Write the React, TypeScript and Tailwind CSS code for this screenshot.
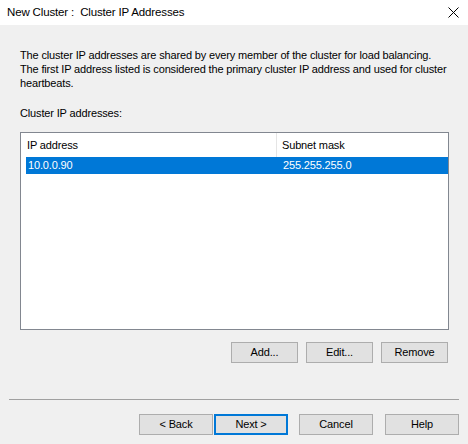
import React from "react";

type Row = { ip: string; mask: string };

const rows: Row[] = [{ ip: "10.0.0.90", mask: "255.255.255.0" }];

function Btn({
  children,
  wide,
  primary,
}: {
  children: React.ReactNode;
  wide?: boolean;
  primary?: boolean;
}) {
  return (
    <button
      className={
        "h-[21px] bg-[#e1e1e1] text-black flex items-center justify-center " +
        (wide ? "w-[74px] " : "w-[67px] ") +
        (primary ? "border-2 border-[#0078d7]" : "border border-[#adadad]")
      }
    >
      {children}
    </button>
  );
}

export default function App() {
  return (
    <div
      className="w-[468px] h-[444px] flex flex-col bg-[#f0f0f0] text-[11px] text-black tracking-[-0.15px]"
      style={{ fontFamily: '"Liberation Sans", Arial, sans-serif' }}
    >
      {/* Title bar */}
      <div className="h-[25px] bg-white flex items-center justify-between pl-[7px] pr-[9px] shrink-0">
        <span className="text-[11.5px] whitespace-nowrap">New Cluster :&nbsp; Cluster IP Addresses</span>
        <svg width="11" height="11" viewBox="0 0 11 11" className="text-black">
          <path d="M0.5 0.5 L10.5 10.5 M10.5 0.5 L0.5 10.5" stroke="currentColor" strokeWidth="1" />
        </svg>
      </div>

      {/* Body */}
      <div className="flex flex-col px-[20px] pt-[23px]">
        <p className="leading-[14px] whitespace-nowrap">
          The cluster IP addresses are shared by every member of the cluster for load balancing.
          <br />
          The first IP address listed is considered the primary cluster IP address and used for cluster
          <br />
          heartbeats.
        </p>

        <div className="mt-[16px] leading-[14px]">Cluster IP addresses:</div>

        {/* List view */}
        <div className="mt-[12px] w-[429px] h-[198px] border border-[#828790] bg-white flex flex-col">
          <div className="h-[24px] flex items-center shrink-0">
            <div className="w-[256px] h-full flex items-center pl-[6px] border-r border-[#e5e5e5]">
              IP address
            </div>
            <div className="flex-1 pl-[5px]">Subnet mask</div>
          </div>
          {rows.map((r) => (
            <div key={r.ip} className="ml-[5px] h-[17px] flex items-center bg-[#0078d7] text-white">
              <div className="w-[251px] pl-[2px]">{r.ip}</div>
              <div className="flex-1 pl-[6px]">{r.mask}</div>
            </div>
          ))}
        </div>

        <div className="mt-[12px] flex justify-end gap-[8px]">
          <Btn>Add...</Btn>
          <Btn>Edit...</Btn>
          <Btn>Remove</Btn>
        </div>
      </div>

      <div className="mx-[9px] mt-[36px] border-t border-[#a0a0a0]" />

      <div className="mt-[14px] flex justify-end pr-[9px]">
        <div className="flex gap-[1px]">
          <Btn wide>&lt; Back</Btn>
          <Btn wide primary>
            Next &gt;
          </Btn>
        </div>
        <div className="ml-[11px]">
          <Btn wide>Cancel</Btn>
        </div>
        <div className="ml-[12px]">
          <Btn wide>Help</Btn>
        </div>
      </div>
    </div>
  );
}
